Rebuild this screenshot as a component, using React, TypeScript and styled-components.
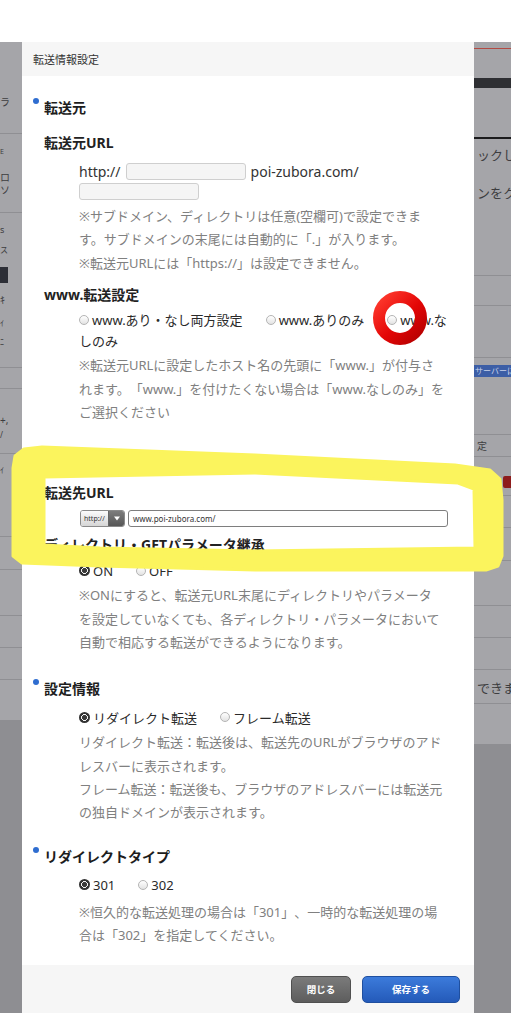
import styled, { createGlobalStyle } from 'styled-components';

const GlobalStyle = createGlobalStyle`
  html, body {
    margin: 0;
    padding: 0;
    background: #fff;
  }
  body {
    font-family: "Noto Sans", "Noto Sans CJK JP", sans-serif;
    color: #222;
    text-spacing-trim: space-all;
  }
`;

const Screen = styled.div`
  position: relative;
  display: flex;
  flex-direction: column;
  width: 100%;
  height: 1024px;
  overflow: hidden;
  background: #fff;
`;

const Blank = styled.div<{ $h: number }>`
  flex-shrink: 0;
  height: ${(p) => p.$h}px;
  background: #fff;
`;

const Stage = styled.div`
  display: flex;
  flex-shrink: 0;
  height: 971px;
`;

/* dimmed page behind the dialog */
const Strip = styled.div<{ $w?: number }>`
  display: flex;
  flex-direction: column;
  overflow: hidden;
  background: #a5a5a9;
  ${(p) => (p.$w ? `width: ${p.$w}px; flex-shrink: 0;` : 'flex: 1; min-width: 0;')}
`;

const StripLine = styled.div<{ $mt: number; $h?: number; $c?: string; $w?: number }>`
  flex-shrink: 0;
  margin-top: ${(p) => p.$mt}px;
  height: ${(p) => p.$h ?? 1}px;
  width: ${(p) => (p.$w ? `${p.$w}px` : 'auto')};
  background: ${(p) => p.$c ?? '#8f8f93'};
`;

const StripText = styled.div<{ $mt: number; $size?: number; $pl?: number }>`
  flex-shrink: 0;
  margin-top: ${(p) => p.$mt}px;
  padding-left: ${(p) => p.$pl ?? 0}px;
  font-size: ${(p) => p.$size ?? 13}px;
  line-height: 12px;
  height: 12px;
  color: #3d3d40;
  white-space: nowrap;
  overflow: hidden;
`;

const StripBand = styled.div<{ $mt: number }>`
  flex-shrink: 0;
  margin-top: ${(p) => p.$mt}px;
  height: 12px;
  background: #3c5ea6;
  color: #c9d3ea;
  font-size: 8px;
  line-height: 12px;
  white-space: nowrap;
  overflow: hidden;
  padding-left: 1px;
`;

const StripBadge = styled.div<{ $mt: number }>`
  flex-shrink: 0;
  margin: ${(p) => p.$mt}px 0 0 29px;
  width: 12px;
  height: 12px;
  border-radius: 2px;
  background: #8d1c1c;
`;

const StripFill = styled.div<{ $mt: number }>`
  flex: 1;
  margin-top: ${(p) => p.$mt}px;
  background: #8e8e92;
`;

/* dialog */
const Modal = styled.div`
  display: flex;
  flex-direction: column;
  flex-shrink: 0;
  width: 452px;
  background: #fff;
`;

const ModalHeader = styled.div`
  display: flex;
  align-items: center;
  height: 34px;
  padding-left: 11px;
  background: #f6f6f6;
  font-size: 11px;
  color: #333;
`;

const ModalBody = styled.div`
  flex: 1;
  padding: 22px 18px 0 11px;
`;

const SectionHeading = styled.div<{ $mt?: number }>`
  position: relative;
  margin-top: ${(p) => p.$mt ?? 0}px;
  padding-left: 11px;
  font-size: 14px;
  line-height: 20px;
  font-weight: 700;
  color: #1d1d1d;

  &::before {
    content: '';
    position: absolute;
    left: 0;
    top: 0;
    width: 6px;
    height: 6px;
    border-radius: 50%;
    background: #2f6dd0;
  }
`;

const FieldLabel = styled.div<{ $mt: number }>`
  margin: ${(p) => p.$mt}px 0 0 11px;
  font-size: 14px;
  line-height: 20px;
  font-weight: 700;
  color: #222;
`;

const FieldBody = styled.div<{ $mt: number }>`
  margin: ${(p) => p.$mt}px 0 0 46px;
`;

const UrlRow = styled.div`
  display: flex;
  flex-wrap: wrap;
  align-items: center;
  column-gap: 5px;
  row-gap: 3px;
  font-size: 14px;
  line-height: 17px;
  color: #333;
`;

const TextInput = styled.div<{ $w: number }>`
  box-sizing: border-box;
  width: ${(p) => p.$w}px;
  height: 17px;
  border: 1px solid #cfcfcf;
  border-radius: 3px;
  background: #f5f5f5;
`;

const Note = styled.p<{ $mt: number }>`
  margin: ${(p) => p.$mt}px 0 0;
  font-size: 13px;
  line-height: 23.4px;
  color: #808080;
`;

const RadioGroup = styled.div`
  font-size: 13px;
  line-height: 21px;
  color: #2a2a2a;
  padding-right: 4px;
`;

const Option = styled.span`
  margin-right: 23px;

  &:last-child {
    margin-right: 0;
  }
`;

const Radio = styled.span<{ $checked?: boolean }>`
  display: inline-block;
  box-sizing: border-box;
  position: relative;
  top: -2px;
  margin-right: 3px;
  border-radius: 50%;
  vertical-align: middle;
  ${(p) =>
    p.$checked
      ? `
    width: 11px;
    height: 11px;
    background: radial-gradient(circle, #3a3a3a 0 2.2px, #f2f2f2 2.8px 3.2px, #333 3.6px);
  `
      : `
    width: 10px;
    height: 10px;
    border: 1px solid #b4b4b4;
    background: linear-gradient(#ffffff, #e3e3e3);
  `}
`;

const SelectRow = styled.div`
  display: flex;
  align-items: center;
  gap: 3px;
  margin-left: 1px;
`;

const SelectBox = styled.div`
  display: flex;
  box-sizing: border-box;
  width: 45px;
  height: 17px;
  border: 1px solid #8a8a8a;
  border-radius: 3px;
  overflow: hidden;
`;

const SelectValue = styled.div`
  flex: 1;
  padding-left: 3px;
  background: linear-gradient(#fbfbfb, #d6d6d6);
  font-size: 7px;
  line-height: 15px;
  color: #333;
`;

const SelectArrow = styled.div`
  display: flex;
  align-items: center;
  justify-content: center;
  width: 15px;
  background: linear-gradient(#7c7c7c, #575757);
  border-left: 1px solid #666;
`;

const UrlInput = styled.div`
  box-sizing: border-box;
  width: 320px;
  height: 17px;
  padding-left: 4px;
  border: 1px solid #7e7e7e;
  border-radius: 3px;
  background: #fff;
  font-size: 8px;
  line-height: 15px;
  color: #333;
`;

const ModalFooter = styled.div`
  display: flex;
  align-items: center;
  justify-content: flex-end;
  gap: 11px;
  height: 48px;
  padding-right: 14px;
  background: #f6f6f6;
`;

const Button = styled.button<{ $primary?: boolean }>`
  width: ${(p) => (p.$primary ? 98 : 60)}px;
  height: 27px;
  border-radius: 5px;
  border: 1px solid ${(p) => (p.$primary ? '#1f4f9f' : '#505050')};
  background: ${(p) =>
    p.$primary ? 'linear-gradient(#3c7bdb, #245ab9)' : 'linear-gradient(#7b7b7b, #5d5d5d)'};
  color: #fff;
  font-family: inherit;
  font-size: 9.5px;
  font-weight: 700;
  padding: 0;
`;

/* hand-drawn marks on the screenshot */
const Marks = styled.svg`
  position: absolute;
  left: 0;
  top: 0;
  pointer-events: none;
`;

function LeftPage() {
  return (
    <Strip $w={22}>
      <StripText $mt={54} $size={10}>ラ</StripText>
      <StripLine $mt={25} />
      <StripText $mt={12} $size={7}>E</StripText>
      <StripText $mt={13} $size={10}>ロ</StripText>
      <StripText $mt={1} $size={10}>ソ</StripText>
      <StripLine $mt={16} />
      <StripText $mt={11} $size={9}>s</StripText>
      <StripText $mt={8} $size={8}>ス</StripText>
      <StripLine $mt={11} $h={16} $w={8} $c="#2c2e36" />
      <StripText $mt={11} $size={10}>ｷ</StripText>
      <StripText $mt={11} $size={8}>ｲ</StripText>
      <StripText $mt={7} $size={8}>ﾆ</StripText>
      <StripLine $mt={19} />
      <StripLine $mt={20} />
      <StripText $mt={25} $size={10}>+,</StripText>
      <StripText $mt={3} $size={8}>/</StripText>
      <StripLine $mt={12} />
      <StripText $mt={10} $size={8}>ｲ</StripText>
      <StripLine $mt={60} />
      <StripLine $mt={32} />
      <StripLine $mt={45} />
      <StripLine $mt={31} />
      <StripLine $mt={31} />
      <StripFill $mt={40} />
    </Strip>
  );
}

function RightPage() {
  return (
    <Strip>
      <StripLine $mt={6} $c="#b34a43" />
      <StripLine $mt={29} $h={10} $c="#2e2f33" />
      <StripLine $mt={49} $h={2} $c="#1b1b1d" />
      <StripText $mt={10} $pl={3}>ックし</StripText>
      <StripText $mt={26} $pl={3}>ンをク</StripText>
      <StripLine $mt={76} />
      <StripLine $mt={29} />
      <StripLine $mt={51} />
      <StripBand $mt={7}>サーバーに</StripBand>
      <StripLine $mt={57} />
      <StripText $mt={5} $size={10} $pl={3}>定</StripText>
      <StripLine $mt={4} />
      <StripBadge $mt={19} />
      <StripLine $mt={7} />
      <StripLine $mt={31} />
      <StripLine $mt={32} />
      <StripLine $mt={44} />
      <StripLine $mt={31} />
      <StripLine $mt={31} />
      <StripText $mt={12} $pl={3}>できます</StripText>
      <StripLine $mt={9} />
      <StripFill $mt={40} />
    </Strip>
  );
}

export default function App() {
  return (
    <>
      <GlobalStyle />
      <Screen>
        <Blank $h={42} />
        <Stage>
          <LeftPage />
          <Modal>
            <ModalHeader>転送情報設定</ModalHeader>
            <ModalBody>
              <SectionHeading>転送元</SectionHeading>
              <FieldLabel $mt={15}>転送元URL</FieldLabel>
              <FieldBody $mt={10}>
                <UrlRow>
                  <span>http://</span>
                  <TextInput $w={120} />
                  <span>poi-zubora.com/</span>
                  <TextInput $w={120} />
                </UrlRow>
                <Note $mt={5}>
                  ※サブドメイン、ディレクトリは任意(空欄可)で設定できま
                  <br />
                  す。サブドメインの末尾には自動的に「.」が入ります。
                  <br />
                  ※転送元URLには「https://」は設定できません。
                </Note>
              </FieldBody>

              <FieldLabel $mt={10}>www.転送設定</FieldLabel>
              <FieldBody $mt={5}>
                <RadioGroup>
                  <Option>
                    <Radio />
                    www.あり・なし両方設定
                  </Option>
                  <Option>
                    <Radio />
                    www.ありのみ
                  </Option>
                  <Option>
                    <Radio />
                    www.なしのみ
                  </Option>
                </RadioGroup>
                <Note $mt={2}>
                  ※転送元URLに設定したホスト名の先頭に「www.」が付与さ
                  <br />
                  れます。「www.」を付けたくない場合は「www.なしのみ」を
                  <br />
                  ご選択ください
                </Note>
              </FieldBody>

              <SectionHeading $mt={24}>転送先</SectionHeading>
              <FieldLabel $mt={15}>転送先URL</FieldLabel>
              <FieldBody $mt={7}>
                <SelectRow>
                  <SelectBox>
                    <SelectValue>http://</SelectValue>
                    <SelectArrow>
                      <svg width="6" height="5" viewBox="0 0 6 5">
                        <path d="M0 0.5 L6 0.5 L3 4.5 Z" fill="#fff" />
                      </svg>
                    </SelectArrow>
                  </SelectBox>
                  <UrlInput>www.poi-zubora.com/</UrlInput>
                </SelectRow>
              </FieldBody>
              <FieldLabel $mt={8}>ディレクトリ・GETパラメータ継承</FieldLabel>
              <FieldBody $mt={6}>
                <RadioGroup>
                  <Option>
                    <Radio $checked />
                    ON
                  </Option>
                  <Option>
                    <Radio />
                    OFF
                  </Option>
                </RadioGroup>
                <Note $mt={2}>
                  ※ONにすると、転送元URL末尾にディレクトリやパラメータ
                  <br />
                  を設定していなくても、各ディレクトリ・パラメータにおいて
                  <br />
                  自動で相応する転送ができるようになります。
                </Note>
              </FieldBody>

              <SectionHeading $mt={24}>設定情報</SectionHeading>
              <FieldBody $mt={9}>
                <RadioGroup>
                  <Option>
                    <Radio $checked />
                    リダイレクト転送
                  </Option>
                  <Option>
                    <Radio />
                    フレーム転送
                  </Option>
                </RadioGroup>
                <Note $mt={2.5}>
                  リダイレクト転送：転送後は、転送先のURLがブラウザのアド
                  <br />
                  レスバーに表示されます。
                  <br />
                  フレーム転送：転送後も、ブラウザのアドレスバーには転送元
                  <br />
                  の独自ドメインが表示されます。
                </Note>
              </FieldBody>

              <SectionHeading $mt={22}>リダイレクトタイプ</SectionHeading>
              <FieldBody $mt={8.5}>
                <RadioGroup>
                  <Option>
                    <Radio $checked />
                    301
                  </Option>
                  <Option>
                    <Radio />
                    302
                  </Option>
                </RadioGroup>
                <Note $mt={4.5}>
                  ※恒久的な転送処理の場合は「301」、一時的な転送処理の場
                  <br />
                  合は「302」を指定してください。
                </Note>
              </FieldBody>
            </ModalBody>
            <ModalFooter>
              <Button>閉じる</Button>
              <Button $primary>保存する</Button>
            </ModalFooter>
          </Modal>
          <RightPage />
        </Stage>
        <Blank $h={11} />

        <Marks width="511" height="1024" viewBox="0 0 511 1024">
          <defs>
            <linearGradient id="ring" x1="0" y1="0" x2="1" y2="1">
              <stop offset="0" stopColor="#ff3a2e" />
              <stop offset="0.55" stopColor="#e30606" />
              <stop offset="1" stopColor="#b50000" />
            </linearGradient>
          </defs>
          <path
            d="M13 468 L15 456 L24 449 L42 447 L255 455 L455 465 L490 470 L500 479 L502 500 L502 556 L498 566 L486 570 L255 570 L100 566 L22 563 L13 556 Z
               M44 477 L255 473 L458 483 L474 489 L475 548 L255 551 L100 548 L44 545 Z"
            fill="#fbf45d"
            fillRule="evenodd"
            stroke="#fbf45d"
            strokeWidth="3"
            strokeLinejoin="round"
          />
          <circle cx="400" cy="318" r="21" fill="none" stroke="url(#ring)" strokeWidth="12" />
        </Marks>
      </Screen>
    </>
  );
}
